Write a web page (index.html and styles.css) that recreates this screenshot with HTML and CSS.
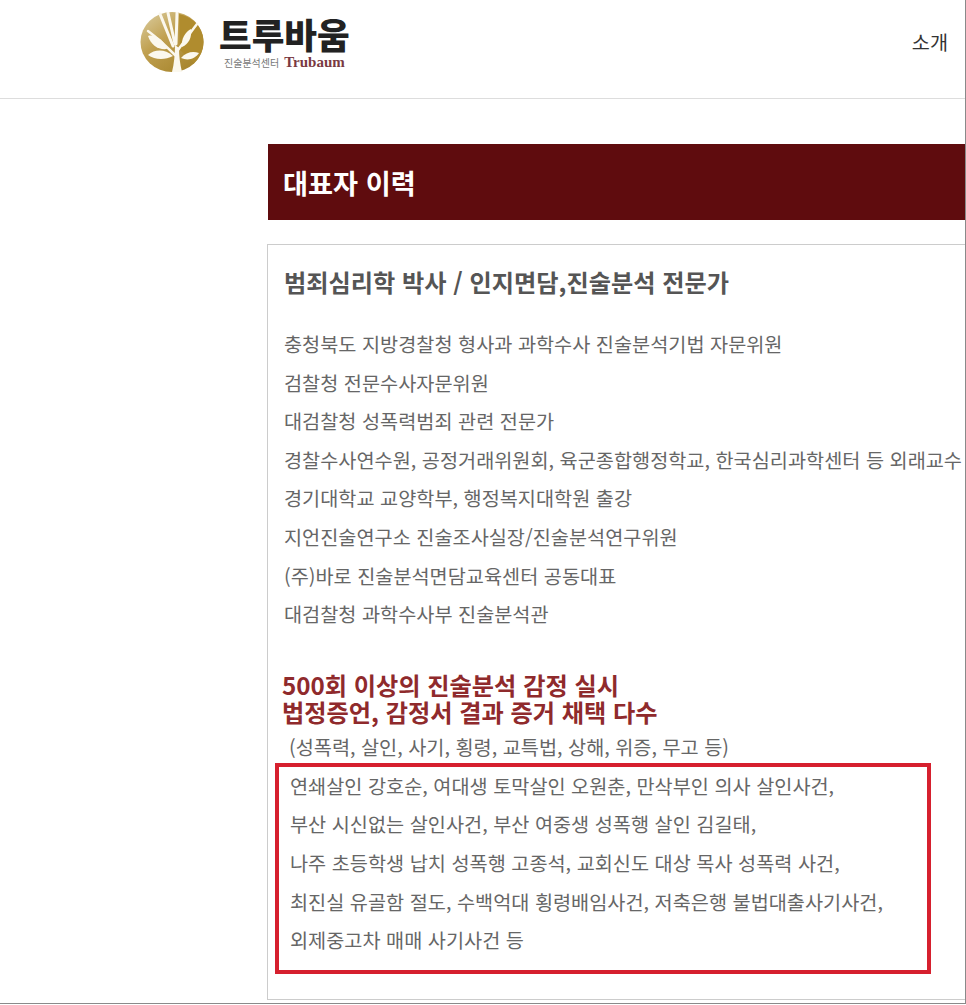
FILE: index.html
```html
<!DOCTYPE html>
<html lang="ko">
<head>
    <meta charset="UTF-8">
    <meta name="viewport" content="width=device-width, initial-scale=1.0">
    <title>트루바움 - 대표자 이력</title>
    <link rel="stylesheet" href="styles.css">
</head>
<body>
<div class="frame">

    <header class="site-header">
        <div class="logo">
            <svg class="logo-mark" width="64" height="60" viewBox="0 0 64 60" aria-hidden="true">
                <defs>
                    <linearGradient id="gold" x1="0" y1="0" x2="0.8" y2="1">
                        <stop offset="0" stop-color="#dccfa4"/>
                        <stop offset="0.45" stop-color="#c0a050"/>
                        <stop offset="1" stop-color="#a5832a"/>
                    </linearGradient>
                </defs>
                <ellipse cx="32" cy="30" rx="31.5" ry="30" fill="url(#gold)"/>
                <!-- right side of the crown is darker -->
                <path d="M39 2 C53 5 63.500 16 63.500 30 C63.500 38 60 45 54 51 L40 38 Z" fill="#b08c2e"/>
                <!-- branches -->
                <g fill="none" stroke="#fbf8ee" stroke-linecap="round">
                    <path d="M20 2 L33 34" stroke-width="3"/>
                    <path d="M28 1 L35 32" stroke-width="3"/>
                    <path d="M37 1 L36 32" stroke-width="3"/>
                    <path d="M35 43 C28 36 20 28 8 19" stroke-width="2.500"/>
                    <path d="M38 38 C44 30 50 21 57 12" stroke-width="2.500"/>
                </g>
                <path d="M32 60 L42 60 C40 52 39 44 39 36 L35 33 C35 42 34 52 32 60 Z" fill="#fbf8ee"/>
                <!-- leaves -->
                <path d="M8 24 C15 22 24 28 27 37 C18 38 11 33 8 24 Z" fill="#fbf8ee"/>
                <path d="M8 43 C15 37 25 37 33 44 C25 48 15 48 8 43 Z" fill="#fbf8ee"/>
                <path d="M41 46 C46 40 53 39 59 41 C55 47 48 49 41 46 Z" fill="#fbf8ee"/>
                <path d="M42 35 C41 27 45 20 51 17 C52 25 49 32 42 35 Z" fill="#fbf8ee"/>
            </svg>
            <div class="logo-text">
                <div class="logo-name">트루바움</div>
                <div class="logo-sub"><span class="logo-sub-ko">진술분석센터</span><span class="logo-sub-en">Trubaum</span></div>
            </div>
        </div>
        <nav class="site-nav">소개</nav>
    </header>

    <main class="content">
        <h1 class="banner">대표자 이력</h1>

        <section class="card">
            <h2 class="card-title">범죄심리학 박사 / 인지면담,진술분석 전문가</h2>

            <ul class="career-list">
                <li>충청북도 지방경찰청 형사과 과학수사 진술분석기법 자문위원</li>
                <li>검찰청 전문수사자문위원</li>
                <li>대검찰청 성폭력범죄 관련 전문가</li>
                <li>경찰수사연수원, 공정거래위원회, 육군종합행정학교, 한국심리과학센터 등 외래교수</li>
                <li>경기대학교 교양학부, 행정복지대학원 출강</li>
                <li>지언진술연구소 진술조사실장/진술분석연구위원</li>
                <li>(주)바로 진술분석면담교육센터 공동대표</li>
                <li>대검찰청 과학수사부 진술분석관</li>
            </ul>

            <p class="highlight">500회 이상의 진술분석 감정 실시<br>법정증언, 감정서 결과 증거 채택 다수</p>
            <p class="case-types">(성폭력, 살인, 사기, 횡령, 교특법, 상해, 위증, 무고 등)</p>

            <ul class="case-box">
                <li>연쇄살인 강호순, 여대생 토막살인 오원춘, 만삭부인 의사 살인사건,</li>
                <li>부산 시신없는 살인사건, 부산 여중생 성폭행 살인 김길태,</li>
                <li>나주 초등학생 납치 성폭행 고종석, 교회신도 대상 목사 성폭력 사건,</li>
                <li>최진실 유골함 절도, 수백억대 횡령배임사건, 저축은행 불법대출사기사건,</li>
                <li>외제중고차 매매 사기사건 등</li>
            </ul>
        </section>
    </main>

</div>
</body>
</html>
```

FILE: styles.css
```css
* {
    box-sizing: border-box;
}
html, body {
    margin: 0;
    padding: 0;
    background-color: #fff;
}
body {
    font-family: "Noto Sans CJK KR", "Noto Sans", sans-serif;
    color: #666;
}
.frame {
    width: 966px;
    height: 1004px;
    overflow: hidden;
    border-right: 1px solid #8a8a8a;
    border-bottom: 1px solid #8a8a8a;
}
ul {
    list-style: none;
    margin: 0;
    padding: 0;
}
li {
    white-space: nowrap;
}

.site-header {
    display: flex;
    justify-content: space-between;
    height: 99px;
    padding: 12px 17px 0 140px;
    border-bottom: 1px solid #ddd;
}
.logo {
    display: flex;
    gap: 15px;
    align-items: flex-start;
}
.logo-name {
    margin-top: -1px;
    font-size: 35.5px;
    line-height: 46px;
    font-weight: 900;
    color: #222;
    white-space: nowrap;
}
.logo-sub {
    display: flex;
    align-items: baseline;
    gap: 5px;
    margin: -2px 0 0 5px;
    line-height: 14px;
    white-space: nowrap;
}
.logo-sub-ko {
    font-size: 10px;
    color: #777;
}
.logo-sub-en {
    font-family: "Liberation Serif", serif;
    font-size: 15px;
    font-weight: 700;
    color: #7a3a42;
}
.site-nav {
    margin-top: 18px;
    font-size: 19.7px;
    line-height: 24px;
    color: #333;
}

.content {
    padding: 45px 0 0 267px;
    width: 740px;
}
.banner {
    margin: 0 0 24px 1px;
    width: 700px;
    height: 76px;
    padding-left: 15px;
    font-size: 27.2px;
    line-height: 76px;
    font-weight: 700;
    color: #fff;
    background-color: #5f0c0e;
}
.card {
    width: 740px;
    height: 756px;
    padding: 17px 0 0 16px;
    border: 1px solid #ccc;
}
.card-title {
    margin: 0 0 23px;
    font-size: 24.2px;
    line-height: 40px;
    font-weight: 700;
    color: #555;
}
.career-list li {
    font-size: 19.7px;
    line-height: 38.6px;
}
.highlight {
    margin: 37px 0 0 -2px;
    font-size: 24.2px;
    line-height: 27px;
    font-weight: 700;
    color: #8f2a2c;
}
.case-types {
    margin: 8px 0 0 5px;
    font-size: 19.7px;
    line-height: 28px;
}
.case-box {
    width: 656px;
    height: 211px;
    margin: 2px 0 0 -9px;
    padding: 0 0 0 11px;
    border: 4px solid #d6202e;
}
.case-box li {
    font-size: 19.7px;
    line-height: 38.6px;
}
```
